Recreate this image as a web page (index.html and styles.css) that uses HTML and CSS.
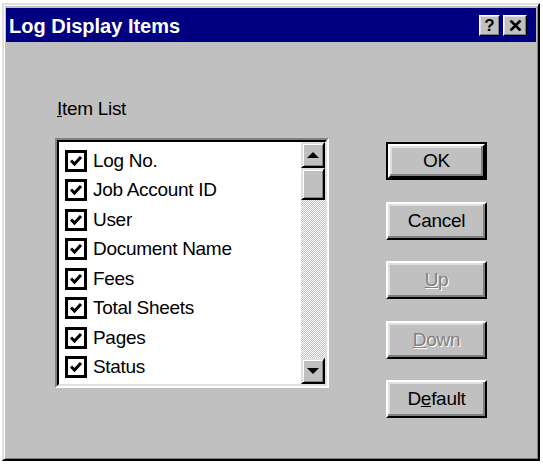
FILE: index.html
```html
<html>
  <head>
    <link rel="stylesheet" href="styles.css">
  </head>
  <body>
    <div class="window">
      <div class="titlebar">
        <span class="title">Log Display Items</span>
        <div class="caption-btns">
          <div class="cap-btn help">?</div>
          <div class="cap-btn close">
            <svg width="13" height="11" viewBox="0 0 13 11">
              <path d="M1.5 0.5 L11.5 10.5 M11.5 0.5 L1.5 10.5" stroke="#000" stroke-width="2.6"/>
            </svg>
          </div>
        </div>
      </div>

      <div class="content">
        <div class="left">
          <div class="label"><u>I</u>tem List</div>
          <div class="listbox">
            <div class="listbox-inner">
              <div class="items">
                <div class="item"><span class="check"></span>Log No.</div>
                <div class="item"><span class="check"></span>Job Account ID</div>
                <div class="item"><span class="check"></span>User</div>
                <div class="item"><span class="check"></span>Document Name</div>
                <div class="item"><span class="check"></span>Fees</div>
                <div class="item"><span class="check"></span>Total Sheets</div>
                <div class="item"><span class="check"></span>Pages</div>
                <div class="item"><span class="check"></span>Status</div>
              </div>
              <div class="scrollbar">
                <div class="sb-btn"><span class="arrow-up"></span></div>
                <div class="sb-thumb"></div>
                <div class="sb-track"></div>
                <div class="sb-btn"><span class="arrow-down"></span></div>
              </div>
            </div>
          </div>
        </div>

        <div class="right">
          <div class="btn default-btn"><span class="btn-face">OK</span></div>
          <div class="btn"><span class="btn-face">Cancel</span></div>
          <div class="btn disabled"><span class="btn-face"><u>U</u>p</span></div>
          <div class="btn disabled"><span class="btn-face"><u>D</u>own</span></div>
          <div class="btn"><span class="btn-face">D<u>e</u>fault</span></div>
        </div>
      </div>
    </div>
  </body>
</html>
```

FILE: styles.css
```css
body{
  margin:0;
  background-color:#ffffff;
  font-family:"Liberation Sans", Arial, sans-serif;
}
.window{
  margin:3px 0 0 2px;
  width:538px;
  height:458px;
  box-sizing:border-box;
  background-color:#c0c0c0;
  border:2px solid;
  border-color:#dfdfdf #000000 #000000 #dfdfdf;
  box-shadow:inset 1px 1px #ffffff, inset -1px -1px #808080;
  padding:3px 2px 2px 2px;
}
.titlebar{
  height:34px;
  background-color:#000080;
  display:flex;
  align-items:center;
  justify-content:space-between;
  padding:0 9px 0 3px;
}
.title{
  color:#ffffff;
  font-weight:bold;
  font-size:20px;
  padding-top:2px;
}
.caption-btns{
  display:flex;
  gap:3px;
}
.cap-btn{
  width:21px;
  height:21px;
  box-sizing:border-box;
  background-color:#c0c0c0;
  border-top:1px solid #ffffff;
  border-left:1px solid #ffffff;
  border-right:1px solid #000000;
  border-bottom:1px solid #000000;
  box-shadow:inset -1px -1px #808080, inset 1px 1px #dfdfdf;
  display:flex;
  align-items:center;
  justify-content:center;
}
.help{
  font-weight:bold;
  font-size:17px;
  line-height:17px;
}
.close{
  width:24px;
}

.content{
  display:flex;
  padding:56px 0 0 49px;
}
.label{
  height:22px;
  line-height:22px;
  font-size:19px;
  letter-spacing:-0.3px;
  margin-bottom:18px;
  padding-left:2px;
}
.listbox{
  width:274px;
  height:250px;
  box-sizing:border-box;
  border:2px solid;
  border-color:#808080 #ffffff #ffffff #808080;
}
.listbox-inner{
  height:100%;
  box-sizing:border-box;
  border:2px solid;
  border-color:#000000 #dfdfdf #dfdfdf #000000;
  background-color:#ffffff;
  display:flex;
}
.items{
  flex:1;
  padding:4px 0 0 6px;
}
.item{
  height:29.5px;
  display:flex;
  align-items:center;
  font-size:19px;
  letter-spacing:-0.3px;
  color:#000000;
}
.check{
  width:22px;
  height:22px;
  box-sizing:border-box;
  border:3px solid #000000;
  margin-right:6px;
  background:#ffffff url("data:image/svg+xml;utf8,<svg xmlns='http://www.w3.org/2000/svg' width='16' height='16' viewBox='0 0 16 16'><polyline points='3,7.5 6.5,11 13,4' fill='none' stroke='black' stroke-width='3'/></svg>") no-repeat center;
}
.scrollbar{
  width:24px;
  display:flex;
  flex-direction:column;
}
.sb-btn, .sb-thumb{
  height:26px;
  box-sizing:border-box;
  background-color:#c0c0c0;
  border:2px solid;
  border-color:#dfdfdf #000000 #000000 #dfdfdf;
  box-shadow:inset 1px 1px #ffffff, inset -1px -1px #808080;
  display:flex;
  align-items:center;
  justify-content:center;
}
.sb-thumb{
  height:32px;
}
.sb-track{
  flex:1;
  background-color:#c0c0c0;
  background-image:repeating-conic-gradient(#ffffff 0 25%, #c0c0c0 0 50%);
  background-size:2px 2px;
}
.arrow-up{
  width:0;
  height:0;
  border-left:6px solid transparent;
  border-right:6px solid transparent;
  border-bottom:6px solid #000000;
}
.arrow-down{
  width:0;
  height:0;
  border-left:6px solid transparent;
  border-right:6px solid transparent;
  border-top:6px solid #000000;
}

.right{
  margin-left:57px;
  margin-top:44px;
  display:flex;
  flex-direction:column;
  gap:21.5px;
}
.btn{
  width:101px;
  height:38px;
  box-sizing:border-box;
  display:flex;
}
.btn-face{
  flex:1;
  background-color:#c0c0c0;
  border:2px solid;
  border-color:#ffffff #000000 #000000 #ffffff;
  box-shadow:inset -2px -2px #808080, inset 2px 2px #dfdfdf;
  display:flex;
  align-items:center;
  justify-content:center;
  font-size:19px;
  letter-spacing:-0.3px;
  color:#000000;
}
.default-btn{
  border:2px solid #000000;
}
.disabled .btn-face{
  color:#808080;
  text-shadow:1px 1px 0 #ffffff;
}
```
